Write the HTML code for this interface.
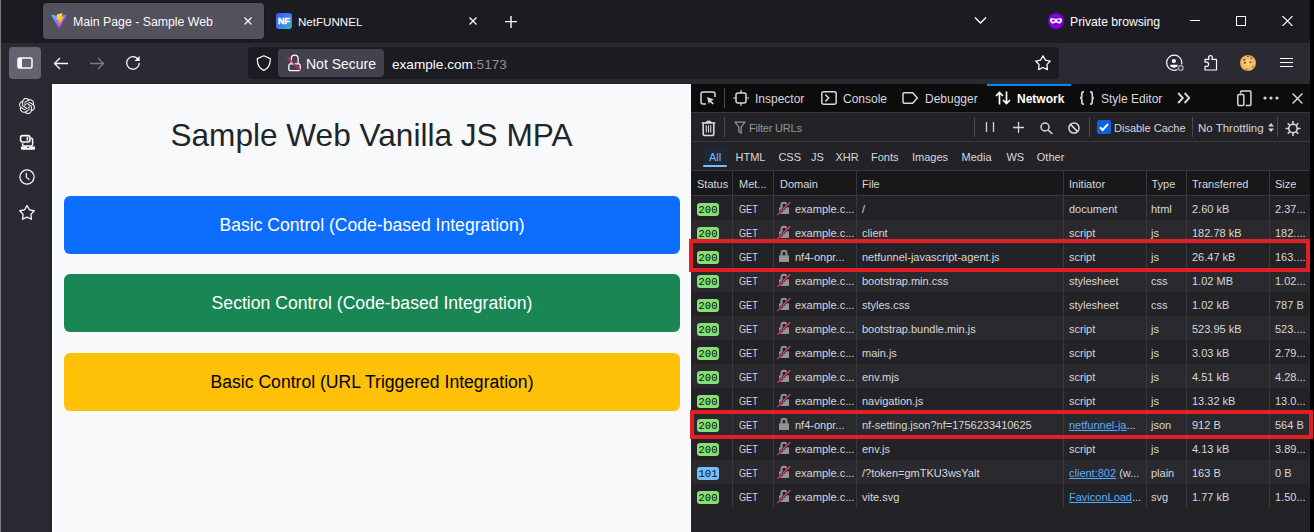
<!DOCTYPE html>
<html><head><meta charset="utf-8"><style>
html,body{margin:0;padding:0;width:1314px;height:532px;overflow:hidden;background:#000}
body{position:relative;font-family:"Liberation Sans",sans-serif}
body>div,body>svg{position:absolute;box-sizing:border-box}
.t{white-space:nowrap}
</style></head><body>
<div style="left:0px;top:0px;width:1314px;height:532px;background:#000;"></div>
<div style="left:0px;top:0px;width:1310px;height:43px;background:#1c1b22;"></div>
<div style="left:0px;top:43px;width:1310px;height:41px;background:#2b2a33;"></div>
<div style="left:0px;top:84px;width:52px;height:448px;background:#2b2a33;"></div>
<div style="left:0px;top:0px;width:1px;height:532px;background:#7b7b7c;"></div>
<div style="left:43px;top:3px;width:221px;height:36px;background:#52515c;border-radius:4px;box-shadow:0 0 2px rgba(0,0,0,.5)"></div>
<svg style="left:51px;top:13px;" width="16" height="16" viewBox="0 0 410 404"><defs><linearGradient id="vg1" gradientUnits="userSpaceOnUse" x1="6" y1="33" x2="235" y2="344"><stop offset="0" stop-color="#41d1ff"/><stop offset="1" stop-color="#bd34fe"/></linearGradient><linearGradient id="vg2" gradientUnits="userSpaceOnUse" x1="194.65" y1="8.8" x2="236.08" y2="293"><stop offset="0" stop-color="#ffea83"/><stop offset=".083" stop-color="#ffdd35"/><stop offset="1" stop-color="#ffa800"/></linearGradient></defs><path d="M399.641 59.5246L215.643 388.545C211.844 395.338 202.084 395.378 198.228 388.618L10.5817 59.5563C6.38087 52.1896 12.6802 43.2665 21.0281 44.7586L205.223 77.6824C206.398 77.8924 207.601 77.8904 208.776 77.6763L389.119 44.8058C397.439 43.2894 403.768 52.1434 399.641 59.5246Z" fill="url(#vg1)"/><path d="M292.965 1.5744L156.801 28.2552C154.563 28.6937 152.906 30.5903 152.771 32.8664L144.395 174.33C144.198 177.662 147.258 180.248 150.51 179.498L188.42 170.749C191.967 169.931 195.172 173.055 194.443 176.622L183.18 231.775C182.422 235.487 185.907 238.661 189.532 237.56L212.947 230.446C216.577 229.344 220.065 232.527 219.297 236.242L201.398 322.875C200.278 328.294 207.486 331.249 210.492 326.603L212.5 323.5L323.454 102.072C325.312 98.3645 322.108 94.137 318.036 94.9228L279.014 102.454C275.347 103.161 272.227 99.746 273.262 96.1583L298.731 7.86689C299.767 4.27314 296.636 0.855181 292.965 1.5744Z" fill="url(#vg2)"/></svg>
<div class="t" style="left:73px;top:16px;font-size:12.3px;line-height:12.3px;color:#fbfbfe;font-weight:400;">Main Page - Sample Web</div>
<svg style="left:244px;top:17px;" width="8" height="8" viewBox="0 0 8 8"><path d="M.5.5l7 7M7.5.5l-7 7" stroke="#fbfbfe" stroke-width="1.3"/></svg>
<svg style="left:276px;top:13px;" width="16" height="16" viewBox="0 0 16 16"><defs><linearGradient id="nfg" x1="0" y1="0" x2="1" y2="1"><stop offset="0" stop-color="#3a5bff"/><stop offset=".55" stop-color="#3f7cf0"/><stop offset="1" stop-color="#22c4a0"/></linearGradient></defs>
<rect x="0" y="0" width="16" height="16" rx="3" fill="url(#nfg)"/>
<text x="8" y="11.2" font-family="Liberation Sans" font-weight="700" font-size="9" fill="#fff" text-anchor="middle" stroke="#fff" stroke-width=".45">NF</text></svg>
<div class="t" style="left:298px;top:16px;font-size:11.6px;line-height:11.6px;color:#fbfbfe;font-weight:400;">NetFUNNEL</div>
<svg style="left:469px;top:17px;" width="8" height="8" viewBox="0 0 8 8"><path d="M.5.5l7 7M7.5.5l-7 7" stroke="#fbfbfe" stroke-width="1.3"/></svg>
<svg style="left:505px;top:16px;" width="12" height="12" viewBox="0 0 12 12"><path d="M6 0v12M0 5.6h12" stroke="#fbfbfe" stroke-width="1.4"/></svg>
<svg style="left:974px;top:16px;" width="13" height="9" viewBox="0 0 13 9"><path d="M1 1.5l5.5 5.5 5.5-5.5" stroke="#fbfbfe" stroke-width="1.4" fill="none"/></svg>
<svg style="left:1048px;top:13px;" width="16" height="16" viewBox="0 0 16 16"><circle cx="8" cy="8" r="8" fill="#8000d7"/><path d="M2 6.6c0-1.3 2.6-1.9 6-.5 3.4-1.4 6-.8 6 .5 0 2.6-1.2 4-2.8 4-1.5 0-2-1.2-3.2-1.2s-1.7 1.2-3.2 1.2C3.2 10.6 2 9.2 2 6.6z" fill="#fff"/><ellipse cx="5.3" cy="7.6" rx="1.5" ry="1.1" fill="#8000d7"/><ellipse cx="10.7" cy="7.6" rx="1.5" ry="1.1" fill="#8000d7"/></svg>
<div class="t" style="left:1070px;top:16px;font-size:12.2px;line-height:12.2px;color:#fbfbfe;font-weight:400;">Private browsing</div>
<div style="left:1190px;top:20px;width:10px;height:1px;background:#fbfbfe;"></div>
<svg style="left:1236px;top:16px;" width="10" height="10" viewBox="0 0 10 10"><rect x=".5" y=".5" width="9" height="9" fill="none" stroke="#fbfbfe" stroke-width="1"/></svg>
<svg style="left:1282px;top:16px;" width="11" height="10" viewBox="0 0 11 10"><path d="M.5 0l10 10M10.5 0l-10 10" stroke="#fbfbfe" stroke-width="1.1"/></svg>
<div style="left:9px;top:47px;width:32px;height:32px;background:#65646e;border-radius:4px"></div>
<svg style="left:17px;top:57px;" width="16" height="12" viewBox="0 0 16 12"><rect x="1" y="1" width="14" height="10" rx="1.5" fill="none" stroke="#fbfbfe" stroke-width="1.5"/><rect x="1" y="1" width="4" height="10" fill="#fbfbfe"/></svg>
<svg style="left:53px;top:57px;" width="16" height="13" viewBox="0 0 16 13"><path d="M15 6.5H1.5M7 1L1.5 6.5 7 12" stroke="#fbfbfe" stroke-width="1.3" fill="none"/></svg>
<svg style="left:89px;top:57px;" width="16" height="13" viewBox="0 0 16 13"><path d="M1 6.5h13.5M9 1l5.5 5.5L9 12" stroke="#7f7e88" stroke-width="1.3" fill="none"/></svg>
<svg style="left:125px;top:55px;" width="16" height="15" viewBox="0 0 16 15"><path d="M13.2 4.3A6.3 6.3 0 1 0 14.3 8" stroke="#fbfbfe" stroke-width="1.3" fill="none"/><path d="M14.6 .9v5.2H9.4z" fill="#fbfbfe"/></svg>
<div style="left:248px;top:47px;width:811px;height:32px;background:#1c1b22;border-radius:4px"></div>
<svg style="left:256px;top:55px;" width="16" height="16" viewBox="0 0 16 16"><path d="M7.8 .8L14.2 3.6C14.6 9.2 11.6 13.6 7.8 15.4 4 13.6 1 9.2 1.4 3.6Z" fill="none" stroke="#fbfbfe" stroke-width="1.2" stroke-linejoin="round"/></svg>
<div style="left:278px;top:49px;width:106px;height:28px;background:#42414d;border-radius:4px"></div>
<svg style="left:285px;top:53px;" width="17" height="19" viewBox="0 0 17 19"><path d="M6.3 10.8V5.6a3.4 3.4 0 0 1 6.8 0V10.8" stroke="#fbfbfe" stroke-width="1.3" fill="none"/><rect x="3.8" y="10.9" width="11.4" height="6.8" rx="1.6" fill="none" stroke="#fbfbfe" stroke-width="1.3"/><path d="M2.3 4.2L16 17.8" stroke="#e22850" stroke-width="1.4"/></svg>
<div class="t" style="left:306px;top:57px;font-size:14px;line-height:14px;color:#fbfbfe;font-weight:400;">Not Secure</div>
<div class="t" style="left:392px;top:58px;font-size:13.6px;line-height:13.6px;color:#fbfbfe;font-weight:400;">example.com<span style="color:#8f8f9d">:5173</span></div>
<svg style="left:1033px;top:54px;" width="20" height="19" viewBox="0 0 20 19"><path d="M10.00 1.80L12.41 6.08L17.23 7.05L13.90 10.67L14.47 15.55L10.00 13.50L5.53 15.55L6.10 10.67L2.77 7.05L7.59 6.08Z" fill="none" stroke="#fbfbfe" stroke-width="1.3" stroke-linejoin="round"/></svg>
<svg style="left:1165px;top:54px;" width="21" height="19" viewBox="0 0 21 19"><circle cx="9.2" cy="8.8" r="7.6" fill="none" stroke="#fbfbfe" stroke-width="1.2"/><circle cx="15.8" cy="13.9" r="3.6" fill="#2b2a33"/><circle cx="15.8" cy="13.9" r="2.3" fill="none" stroke="#b8b8c0" stroke-width="1.1"/><circle cx="8.9" cy="7" r="2.1" fill="#fbfbfe"/><path d="M5 10.8h7.8c0 1.8-1.7 3-3.9 3s-3.9-1.2-3.9-3z" fill="#fbfbfe"/></svg>
<svg style="left:1203px;top:54px;" width="15" height="18" viewBox="0 0 15 18"><path d="M2 5.4H6C6 4.5 5.6 4.2 5.6 3.5A1.9 1.9 0 0 1 9.4 3.5C9.4 4.2 9 4.5 9 5.4H13.5V16H2V12.4H3.5A2.15 2.15 0 0 0 3.5 8.1H2Z" fill="none" stroke="#fbfbfe" stroke-width="1.2" stroke-linejoin="round"/></svg>
<svg style="left:1240px;top:55px;" width="16" height="16" viewBox="0 0 16 16"><defs><radialGradient id="ck" cx=".5" cy=".5" r=".55"><stop offset="0" stop-color="#f6d690"/><stop offset=".8" stop-color="#eeb659"/><stop offset="1" stop-color="#d89a3c"/></radialGradient></defs><circle cx="8" cy="8" r="8" fill="url(#ck)"/><circle cx="8" cy="1.3" r=".9" fill="#7a3d14"/><circle cx="4.3" cy="4.8" r="1" fill="#7a3d14"/><circle cx="11.3" cy="3.4" r=".8" fill="#7a3d14"/><circle cx="5" cy="7.8" r="1" fill="#7a3d14"/><ellipse cx="10.5" cy="7.2" rx="1.3" ry=".8" fill="#7a3d14"/><circle cx="12.8" cy="11.8" r=".8" fill="#8a4d20"/><circle cx="6.5" cy="14.6" r=".8" fill="#8a4d20"/></svg>
<svg style="left:1280px;top:57px;" width="13" height="11" viewBox="0 0 13 11"><path d="M0 1.5h13M0 5.5h13M0 9.5h13" stroke="#fbfbfe" stroke-width="1.2"/></svg>
<svg style="left:19px;top:98px;" width="16" height="16" viewBox="0 0 24 24"><path d="M22.2819 9.8211a5.9847 5.9847 0 0 0-.5157-4.9108 6.0462 6.0462 0 0 0-6.5098-2.9A6.0651 6.0651 0 0 0 4.9807 4.1818a5.9847 5.9847 0 0 0-3.9977 2.9 6.0462 6.0462 0 0 0 .7427 7.0966 5.98 5.98 0 0 0 .511 4.9107 6.051 6.051 0 0 0 6.5146 2.9001A5.9847 5.9847 0 0 0 13.2599 24a6.0557 6.0557 0 0 0 5.7718-4.2058 5.9894 5.9894 0 0 0 3.9977-2.9001 6.0557 6.0557 0 0 0-.7475-7.0729zm-9.022 12.6081a4.4755 4.4755 0 0 1-2.8764-1.0408l.1419-.0804 4.7783-2.7582a.7948.7948 0 0 0 .3927-.6813v-6.7369l2.02 1.1686a.071.071 0 0 1 .038.052v5.5826a4.504 4.504 0 0 1-4.4945 4.4944zm-9.6607-4.1254a4.4708 4.4708 0 0 1-.5346-3.0137l.142.0852 4.783 2.7582a.7712.7712 0 0 0 .7806 0l5.8428-3.3685v2.3324a.0804.0804 0 0 1-.0332.0615L9.74 19.9502a4.4992 4.4992 0 0 1-6.1408-1.6464zM2.3408 7.8956a4.485 4.485 0 0 1 2.3655-1.9728V11.6a.7664.7664 0 0 0 .3879.6765l5.8144 3.3543-2.0201 1.1685a.0757.0757 0 0 1-.071 0l-4.8303-2.7865A4.504 4.504 0 0 1 2.3408 7.872zm16.5963 3.8558L13.1038 8.364 15.1192 7.2a.0757.0757 0 0 1 .071 0l4.8303 2.7913a4.4944 4.4944 0 0 1-.6765 8.1042v-5.6772a.79.79 0 0 0-.407-.667zm2.0107-3.0231l-.142-.0852-4.7735-2.7818a.7759.7759 0 0 0-.7854 0L9.409 9.2297V6.8974a.0662.0662 0 0 1 .0284-.0615l4.8303-2.7866a4.4992 4.4992 0 0 1 6.6802 4.66zM8.3065 12.863l-2.02-1.1638a.0804.0804 0 0 1-.038-.0567V6.0742a4.4992 4.4992 0 0 1 7.3757-3.4537l-.142.0805L8.704 5.459a.7948.7948 0 0 0-.3927.6813zm1.0976-2.3654l2.602-1.4998 2.6069 1.4998v2.9994l-2.5974 1.4997-2.6067-1.4997Z" fill="#fbfbfe"/></svg>
<svg style="left:19px;top:134px;" width="17" height="17" viewBox="0 0 17 17"><rect x="1.6" y="1.6" width="9.4" height="6.4" rx="2" fill="none" stroke="#fbfbfe" stroke-width="1.6"/><rect x="7.6" y="3" width="1.6" height="3.6" fill="#fbfbfe"/><path d="M3.6 9.2v1.2a1.5 1.5 0 0 0 1.5 1.5h7a1.5 1.5 0 0 0 1.5-1.5V5.7a1.5 1.5 0 0 0-1.5-1.5h-.3" fill="none" stroke="#fbfbfe" stroke-width="1.5"/><path d="M2 12.6h14v2.1a1 1 0 0 1-1 1H3a1 1 0 0 1-1-1z" fill="#fbfbfe"/><ellipse cx="9" cy="13.4" rx="1" ry=".6" fill="#2b2a33"/></svg>
<svg style="left:19px;top:169px;" width="16" height="16" viewBox="0 0 16 16"><circle cx="8" cy="8" r="7.1" fill="none" stroke="#fbfbfe" stroke-width="1.2"/><path d="M7.3 3.8v4.3l3 2.6" stroke="#fbfbfe" stroke-width="1.2" fill="none"/></svg>
<svg style="left:17px;top:204px;" width="20" height="19" viewBox="0 0 20 19"><path d="M10.00 1.50L12.41 5.78L17.23 6.75L13.90 10.37L14.47 15.25L10.00 13.20L5.53 15.25L6.10 10.37L2.77 6.75L7.59 5.78Z" fill="none" stroke="#fbfbfe" stroke-width="1.3" stroke-linejoin="round"/></svg>
<div style="left:52px;top:84px;width:639px;height:448px;background:#fff;"></div>
<div style="left:53px;top:85px;width:638px;height:447px;background:#f8f9fa;"></div>
<div style="left:52px;top:84px;width:639px;height:448px;background:transparent;box-shadow:-1px 0 4px rgba(0,0,0,.35)"></div>
<div class="t" style="left:52px;top:119px;width:639px;text-align:center;font-size:31.6px;line-height:32px;color:#212529">Sample Web Vanilla JS MPA</div>
<div class="t" style="left:64px;top:196px;width:616px;height:58px;border-radius:6px;background:#0d6efd;color:#fff;font-size:17.6px;line-height:58px;text-align:center">Basic Control (Code-based Integration)</div>
<div class="t" style="left:64px;top:274.2px;width:616px;height:58px;border-radius:6px;background:#198754;color:#fff;font-size:17.6px;line-height:58px;text-align:center">Section Control (Code-based Integration)</div>
<div class="t" style="left:64px;top:353px;width:616px;height:58px;border-radius:6px;background:#ffc107;color:#000;font-size:17.6px;line-height:58px;text-align:center">Basic Control (URL Triggered Integration)</div>
<div style="left:691px;top:84px;width:619px;height:448px;background:#232327;"></div>
<div style="left:691px;top:84px;width:619px;height:28px;background:#0c0c0d;"></div>
<div style="left:691px;top:112px;width:619px;height:1px;background:#38383d;"></div>
<div style="left:691px;top:141px;width:619px;height:1px;background:#38383d;"></div>
<div style="left:691px;top:170px;width:619px;height:1px;background:#38383d;"></div>
<div style="left:691px;top:171px;width:619px;height:24px;background:#18181a;"></div>
<div style="left:691px;top:195px;width:619px;height:1px;background:#38383d;"></div>
<svg style="left:700px;top:91px;" width="16" height="14" viewBox="0 0 16 14"><path d="M6 13H3a2 2 0 0 1-2-2V3a2 2 0 0 1 2-2h10a2 2 0 0 1 2 2v3" fill="none" stroke="#d7d7db" stroke-width="1.5"/><path d="M7 6l7 2.6-2.8 1.2 2.6 2.6-1.2 1.2-2.6-2.6L8.8 13z" fill="#d7d7db"/></svg>
<div style="left:724px;top:88px;width:1px;height:20px;background:#4a4a4f;"></div>
<svg style="left:733px;top:90px;" width="16" height="16" viewBox="0 0 16 16"><rect x="3" y="3" width="10" height="10" rx="2" fill="none" stroke="#d7d7db" stroke-width="1.5"/><path d="M8 0v3M8 13v3M0 8h3M13 8h3" stroke="#d7d7db" stroke-width="1.2"/></svg>
<div class="t" style="left:755px;top:93px;font-size:12px;line-height:12px;color:#d7d7db;font-weight:400;">Inspector</div>
<svg style="left:821px;top:91px;" width="16" height="14" viewBox="0 0 16 14"><rect x=".8" y=".8" width="14.4" height="12.4" rx="2" fill="none" stroke="#d7d7db" stroke-width="1.5"/><path d="M4.3 3.6L7.7 7 4.3 10.4" stroke="#d7d7db" stroke-width="1.5" fill="none"/></svg>
<div class="t" style="left:843px;top:93px;font-size:12px;line-height:12px;color:#d7d7db;font-weight:400;">Console</div>
<svg style="left:902px;top:92px;" width="16" height="12" viewBox="0 0 16 12"><path d="M1 2a1.2 1.2 0 0 1 1.2-1.2h8.5l4.6 5.2-4.6 5.2H2.2A1.2 1.2 0 0 1 1 10z" fill="none" stroke="#d7d7db" stroke-width="1.5" stroke-linejoin="round"/></svg>
<div class="t" style="left:925px;top:93px;font-size:12px;line-height:12px;color:#d7d7db;font-weight:400;">Debugger</div>
<div style="left:987px;top:84px;width:84px;height:2px;background:#0a84ff;"></div>
<svg style="left:995px;top:91px;" width="16" height="14" viewBox="0 0 16 14"><path d="M4.5 13.5V1.5M1 5l3.5-3.5L8 5M11.5.5v12M8 9l3.5 3.5L15 9" stroke="#fff" stroke-width="1.7" fill="none"/></svg>
<div class="t" style="left:1017px;top:93px;font-size:12px;line-height:12px;color:#fff;font-weight:700;">Network</div>
<svg style="left:1079px;top:91px;" width="16" height="14" viewBox="0 0 16 14"><path d="M5 .9H4.2C3.2.9 2.8 1.5 2.8 2.4V5C2.8 6 2.2 7 1 7 2.2 7 2.8 8 2.8 9v2.6c0 .9.4 1.5 1.4 1.5H5M11 .9h.8c1 0 1.4.6 1.4 1.5V5c0 1 .6 2 1.8 2-1.2 0-1.8 1-1.8 2v2.6c0 .9-.4 1.5-1.4 1.5H11" fill="none" stroke="#d7d7db" stroke-width="1.7"/></svg>
<div class="t" style="left:1101px;top:93px;font-size:12px;line-height:12px;color:#d7d7db;font-weight:400;">Style Editor</div>
<svg style="left:1177px;top:92px;" width="14" height="12" viewBox="0 0 14 12"><path d="M1.2 1L5.8 6 1.2 11M7.6 1l4.6 5-4.6 5" stroke="#d7d7db" stroke-width="1.9" fill="none"/></svg>
<svg style="left:1237px;top:90px;" width="16" height="17" viewBox="0 0 16 17"><rect x=".8" y="4.6" width="6" height="11" rx="1" fill="none" stroke="#d7d7db" stroke-width="1.5"/><path d="M3.6 3.6V1.9a1 1 0 0 1 1-1h8.3a1 1 0 0 1 1 1v12.7a1 1 0 0 1-1 1H8.6" fill="none" stroke="#d7d7db" stroke-width="1.5"/></svg>
<svg style="left:1263px;top:96px;" width="16" height="4" viewBox="0 0 16 4"><circle cx="2" cy="2" r="1.6" fill="#d7d7db"/><circle cx="8" cy="2" r="1.6" fill="#d7d7db"/><circle cx="14" cy="2" r="1.6" fill="#d7d7db"/></svg>
<svg style="left:1292px;top:93px;" width="11" height="11" viewBox="0 0 11 11"><path d="M.6.6l9.8 9.8M10.4.6L.6 10.4" stroke="#d7d7db" stroke-width="1.4"/></svg>
<svg style="left:701px;top:119px;" width="15" height="18" viewBox="0 0 15 18"><path d="M.8 4H14.2" stroke="#d7d7db" stroke-width="1.6"/><path d="M5 4a2.5 1.8 0 0 1 5 0" fill="#d7d7db" stroke="#d7d7db" stroke-width="1.2"/><path d="M2.2 4.3V14.7a1.8 1.8 0 0 0 1.8 1.8h7a1.8 1.8 0 0 0 1.8-1.8V4.3" fill="none" stroke="#d7d7db" stroke-width="1.6"/><path d="M5.3 6.2V13.6M7.5 6.2V13.6M9.7 6.2V13.6" stroke="#d7d7db" stroke-width="1.1"/></svg>
<div style="left:724px;top:117px;width:1px;height:20px;background:#4a4a4f;"></div>
<svg style="left:734px;top:121px;" width="12" height="13" viewBox="0 0 12 13"><path d="M1 1.2h10L7.2 5.8v6.4L4.8 10.6V5.8z" fill="none" stroke="#939395" stroke-width="1.2" stroke-linejoin="round"/><path d="M5.2 6h1.6v5.2L5.2 10.2z" fill="#5f5f63"/></svg>
<div class="t" style="left:749px;top:123px;font-size:11px;line-height:11px;color:#939395;font-weight:400;letter-spacing:-0.2px">Filter URLs</div>
<div style="left:974px;top:117px;width:1px;height:20px;background:#4a4a4f;"></div>
<svg style="left:985px;top:122px;" width="10" height="11" viewBox="0 0 10 11"><path d="M1.5 0v10M8.5 0v10" stroke="#d7d7db" stroke-width="1.3"/></svg>
<svg style="left:1013px;top:122px;" width="11" height="11" viewBox="0 0 11 11"><path d="M5.5 0v11M0 5.5h11" stroke="#d7d7db" stroke-width="1.3"/></svg>
<svg style="left:1040px;top:122px;" width="14" height="12" viewBox="0 0 14 12"><circle cx="5" cy="5" r="4" fill="none" stroke="#d7d7db" stroke-width="1.5"/><path d="M8 8l4.5 4" stroke="#d7d7db" stroke-width="1.6"/></svg>
<svg style="left:1068px;top:122px;" width="12" height="12" viewBox="0 0 12 12"><circle cx="6" cy="6" r="5.1" fill="none" stroke="#d7d7db" stroke-width="1.5"/><path d="M2.4 2.4l7.2 7.2" stroke="#d7d7db" stroke-width="1.5"/></svg>
<div style="left:1089px;top:117px;width:1px;height:20px;background:#4a4a4f;"></div>
<div style="left:1097px;top:120px;width:14px;height:14px;background:#0b63e0;border-radius:2px"></div>
<svg style="left:1099px;top:122px;" width="10" height="10" viewBox="0 0 10 10"><path d="M1 5.2l2.7 2.8L9 2" stroke="#fff" stroke-width="2" fill="none"/></svg>
<div class="t" style="left:1114px;top:123px;font-size:11px;line-height:11px;color:#d7d7db;font-weight:400;">Disable Cache</div>
<div style="left:1192px;top:117px;width:1px;height:20px;background:#4a4a4f;"></div>
<div class="t" style="left:1198px;top:123px;font-size:11.5px;line-height:11.5px;color:#d7d7db;font-weight:400;">No Throttling</div>
<svg style="left:1268px;top:122px;" width="6" height="11" viewBox="0 0 6 11"><path d="M0 4.5L3 1l3 3.5zM0 6.5L3 10l3-3.5z" fill="#d7d7db"/></svg>
<div style="left:1277px;top:117px;width:1px;height:20px;background:#4a4a4f;"></div>
<svg style="left:1285px;top:121px;" width="16" height="15" viewBox="0 0 16 15"><g stroke="#d7d7db" stroke-width="1.6"><path d="M8 0v15M0.5 7.5h15M2.7 2.2l10.6 10.6M13.3 2.2L2.7 12.8"/></g><circle cx="8" cy="7.5" r="4.2" fill="#232327" stroke="#d7d7db" stroke-width="1.6"/></svg>
<div style="left:703px;top:146px;width:24px;height:21px;background:#1f2735;border-radius:2px 2px 0 0"></div>
<div style="left:703px;top:165px;width:24px;height:2px;background:#75bfff;border-radius:1px"></div>
<div class="t" style="left:709px;top:152px;font-size:11px;line-height:11px;color:#75bfff;font-weight:400;">All</div>
<div class="t" style="left:735.5px;top:152px;font-size:11px;line-height:11px;color:#d7d7db;font-weight:400;">HTML</div>
<div class="t" style="left:778.4px;top:152px;font-size:11px;line-height:11px;color:#d7d7db;font-weight:400;">CSS</div>
<div class="t" style="left:811px;top:152px;font-size:11px;line-height:11px;color:#d7d7db;font-weight:400;">JS</div>
<div class="t" style="left:835.4px;top:152px;font-size:11px;line-height:11px;color:#d7d7db;font-weight:400;">XHR</div>
<div class="t" style="left:871px;top:152px;font-size:11px;line-height:11px;color:#d7d7db;font-weight:400;">Fonts</div>
<div class="t" style="left:912px;top:152px;font-size:11px;line-height:11px;color:#d7d7db;font-weight:400;">Images</div>
<div class="t" style="left:961.6px;top:152px;font-size:11px;line-height:11px;color:#d7d7db;font-weight:400;">Media</div>
<div class="t" style="left:1006.4px;top:152px;font-size:11px;line-height:11px;color:#d7d7db;font-weight:400;">WS</div>
<div class="t" style="left:1036.8px;top:152px;font-size:11px;line-height:11px;color:#d7d7db;font-weight:400;">Other</div>
<div class="t" style="left:697px;top:179px;font-size:11px;line-height:11px;color:#d7d7db;font-weight:400;">Status</div>
<div class="t" style="left:739px;top:179px;font-size:11px;line-height:11px;color:#d7d7db;font-weight:400;">Met...</div>
<div class="t" style="left:780px;top:179px;font-size:11px;line-height:11px;color:#d7d7db;font-weight:400;">Domain</div>
<div class="t" style="left:862px;top:179px;font-size:11px;line-height:11px;color:#d7d7db;font-weight:400;">File</div>
<div class="t" style="left:1069px;top:179px;font-size:11px;line-height:11px;color:#d7d7db;font-weight:400;">Initiator</div>
<div class="t" style="left:1151.5px;top:179px;font-size:11px;line-height:11px;color:#d7d7db;font-weight:400;">Type</div>
<div class="t" style="left:1192px;top:179px;font-size:11px;line-height:11px;color:#d7d7db;font-weight:400;">Transferred</div>
<div class="t" style="left:1275px;top:179px;font-size:11px;line-height:11px;color:#d7d7db;font-weight:400;">Size</div>
<div class="t" style="left:697px;top:203px;width:22px;height:13px;padding-top:1px;border-radius:3px;background:#86de74;color:#0c0c0d;font-family:&quot;Liberation Mono&quot;,monospace;font-size:10.5px;line-height:13px;text-align:center">200</div>
<div class="t" style="left:739px;top:204px;font-size:11px;line-height:11px;color:#d7d7db;font-weight:400;transform:scaleX(.83);transform-origin:0 0">GET</div>
<svg style="left:777px;top:201px;" width="14" height="15" viewBox="0 0 14 15"><path d="M4.5 6.6V4.3a2.5 2.5 0 0 1 5 0V6.6" fill="none" stroke="#939395" stroke-width="2"/><rect x="2" y="6.3" width="10" height="6.7" rx=".8" fill="#939395"/><path d="M.5 13.9L13.2 1.2" stroke="#232327" stroke-width="2.6"/><path d="M.5 13.9L13.2 1.2" stroke="#f0386b" stroke-width="1.3"/></svg>
<div class="t" style="left:795px;top:204px;font-size:11px;line-height:11px;color:#d7d7db;font-weight:400;">example.c...</div>
<div class="t" style="left:862px;top:204px;font-size:11px;line-height:11px;color:#d7d7db;font-weight:400;">/</div>
<div class="t" style="left:1069px;top:204px;font-size:11px;line-height:11px;color:#d7d7db;font-weight:400;">document</div>
<div class="t" style="left:1151px;top:204px;font-size:11px;line-height:11px;color:#d7d7db;font-weight:400;">html</div>
<div class="t" style="left:1192px;top:204px;font-size:11px;line-height:11px;color:#d7d7db;font-weight:400;">2.60 kB</div>
<div class="t" style="left:1275px;top:204px;font-size:11px;line-height:11px;color:#d7d7db;font-weight:400;">2.37...</div>
<div style="left:691px;top:220px;width:619px;height:24px;background:#2a2a2e;"></div>
<div class="t" style="left:697px;top:227px;width:22px;height:13px;padding-top:1px;border-radius:3px;background:#86de74;color:#0c0c0d;font-family:&quot;Liberation Mono&quot;,monospace;font-size:10.5px;line-height:13px;text-align:center">200</div>
<div class="t" style="left:739px;top:228px;font-size:11px;line-height:11px;color:#d7d7db;font-weight:400;transform:scaleX(.83);transform-origin:0 0">GET</div>
<svg style="left:777px;top:225px;" width="14" height="15" viewBox="0 0 14 15"><path d="M4.5 6.6V4.3a2.5 2.5 0 0 1 5 0V6.6" fill="none" stroke="#939395" stroke-width="2"/><rect x="2" y="6.3" width="10" height="6.7" rx=".8" fill="#939395"/><path d="M.5 13.9L13.2 1.2" stroke="#2a2a2e" stroke-width="2.6"/><path d="M.5 13.9L13.2 1.2" stroke="#f0386b" stroke-width="1.3"/></svg>
<div class="t" style="left:795px;top:228px;font-size:11px;line-height:11px;color:#d7d7db;font-weight:400;">example.c...</div>
<div class="t" style="left:862px;top:228px;font-size:11px;line-height:11px;color:#d7d7db;font-weight:400;">client</div>
<div class="t" style="left:1069px;top:228px;font-size:11px;line-height:11px;color:#d7d7db;font-weight:400;">script</div>
<div class="t" style="left:1151px;top:228px;font-size:11px;line-height:11px;color:#d7d7db;font-weight:400;">js</div>
<div class="t" style="left:1192px;top:228px;font-size:11px;line-height:11px;color:#d7d7db;font-weight:400;">182.78 kB</div>
<div class="t" style="left:1275px;top:228px;font-size:11px;line-height:11px;color:#d7d7db;font-weight:400;">182....</div>
<div class="t" style="left:697px;top:251px;width:22px;height:13px;padding-top:1px;border-radius:3px;background:#86de74;color:#0c0c0d;font-family:&quot;Liberation Mono&quot;,monospace;font-size:10.5px;line-height:13px;text-align:center">200</div>
<div class="t" style="left:739px;top:252px;font-size:11px;line-height:11px;color:#d7d7db;font-weight:400;transform:scaleX(.83);transform-origin:0 0">GET</div>
<svg style="left:777px;top:249px;" width="14" height="15" viewBox="0 0 14 15"><path d="M4.5 6.6V4.3a2.5 2.5 0 0 1 5 0V6.6" fill="none" stroke="#939395" stroke-width="2"/><rect x="2" y="6.3" width="10" height="6.7" rx=".8" fill="#939395"/></svg>
<div class="t" style="left:795px;top:252px;font-size:11px;line-height:11px;color:#d7d7db;font-weight:400;">nf4-onpr...</div>
<div class="t" style="left:862px;top:252px;font-size:11px;line-height:11px;color:#d7d7db;font-weight:400;">netfunnel-javascript-agent.js</div>
<div class="t" style="left:1069px;top:252px;font-size:11px;line-height:11px;color:#d7d7db;font-weight:400;">script</div>
<div class="t" style="left:1151px;top:252px;font-size:11px;line-height:11px;color:#d7d7db;font-weight:400;">js</div>
<div class="t" style="left:1192px;top:252px;font-size:11px;line-height:11px;color:#d7d7db;font-weight:400;">26.47 kB</div>
<div class="t" style="left:1275px;top:252px;font-size:11px;line-height:11px;color:#d7d7db;font-weight:400;">163....</div>
<div style="left:691px;top:268px;width:619px;height:24px;background:#2a2a2e;"></div>
<div class="t" style="left:697px;top:275px;width:22px;height:13px;padding-top:1px;border-radius:3px;background:#86de74;color:#0c0c0d;font-family:&quot;Liberation Mono&quot;,monospace;font-size:10.5px;line-height:13px;text-align:center">200</div>
<div class="t" style="left:739px;top:276px;font-size:11px;line-height:11px;color:#d7d7db;font-weight:400;transform:scaleX(.83);transform-origin:0 0">GET</div>
<svg style="left:777px;top:273px;" width="14" height="15" viewBox="0 0 14 15"><path d="M4.5 6.6V4.3a2.5 2.5 0 0 1 5 0V6.6" fill="none" stroke="#939395" stroke-width="2"/><rect x="2" y="6.3" width="10" height="6.7" rx=".8" fill="#939395"/><path d="M.5 13.9L13.2 1.2" stroke="#2a2a2e" stroke-width="2.6"/><path d="M.5 13.9L13.2 1.2" stroke="#f0386b" stroke-width="1.3"/></svg>
<div class="t" style="left:795px;top:276px;font-size:11px;line-height:11px;color:#d7d7db;font-weight:400;">example.c...</div>
<div class="t" style="left:862px;top:276px;font-size:11px;line-height:11px;color:#d7d7db;font-weight:400;">bootstrap.min.css</div>
<div class="t" style="left:1069px;top:276px;font-size:11px;line-height:11px;color:#d7d7db;font-weight:400;">stylesheet</div>
<div class="t" style="left:1151px;top:276px;font-size:11px;line-height:11px;color:#d7d7db;font-weight:400;">css</div>
<div class="t" style="left:1192px;top:276px;font-size:11px;line-height:11px;color:#d7d7db;font-weight:400;">1.02 MB</div>
<div class="t" style="left:1275px;top:276px;font-size:11px;line-height:11px;color:#d7d7db;font-weight:400;">1.02...</div>
<div class="t" style="left:697px;top:299px;width:22px;height:13px;padding-top:1px;border-radius:3px;background:#86de74;color:#0c0c0d;font-family:&quot;Liberation Mono&quot;,monospace;font-size:10.5px;line-height:13px;text-align:center">200</div>
<div class="t" style="left:739px;top:300px;font-size:11px;line-height:11px;color:#d7d7db;font-weight:400;transform:scaleX(.83);transform-origin:0 0">GET</div>
<svg style="left:777px;top:297px;" width="14" height="15" viewBox="0 0 14 15"><path d="M4.5 6.6V4.3a2.5 2.5 0 0 1 5 0V6.6" fill="none" stroke="#939395" stroke-width="2"/><rect x="2" y="6.3" width="10" height="6.7" rx=".8" fill="#939395"/><path d="M.5 13.9L13.2 1.2" stroke="#232327" stroke-width="2.6"/><path d="M.5 13.9L13.2 1.2" stroke="#f0386b" stroke-width="1.3"/></svg>
<div class="t" style="left:795px;top:300px;font-size:11px;line-height:11px;color:#d7d7db;font-weight:400;">example.c...</div>
<div class="t" style="left:862px;top:300px;font-size:11px;line-height:11px;color:#d7d7db;font-weight:400;">styles.css</div>
<div class="t" style="left:1069px;top:300px;font-size:11px;line-height:11px;color:#d7d7db;font-weight:400;">stylesheet</div>
<div class="t" style="left:1151px;top:300px;font-size:11px;line-height:11px;color:#d7d7db;font-weight:400;">css</div>
<div class="t" style="left:1192px;top:300px;font-size:11px;line-height:11px;color:#d7d7db;font-weight:400;">1.02 kB</div>
<div class="t" style="left:1275px;top:300px;font-size:11px;line-height:11px;color:#d7d7db;font-weight:400;">787 B</div>
<div style="left:691px;top:316px;width:619px;height:24px;background:#2a2a2e;"></div>
<div class="t" style="left:697px;top:323px;width:22px;height:13px;padding-top:1px;border-radius:3px;background:#86de74;color:#0c0c0d;font-family:&quot;Liberation Mono&quot;,monospace;font-size:10.5px;line-height:13px;text-align:center">200</div>
<div class="t" style="left:739px;top:324px;font-size:11px;line-height:11px;color:#d7d7db;font-weight:400;transform:scaleX(.83);transform-origin:0 0">GET</div>
<svg style="left:777px;top:321px;" width="14" height="15" viewBox="0 0 14 15"><path d="M4.5 6.6V4.3a2.5 2.5 0 0 1 5 0V6.6" fill="none" stroke="#939395" stroke-width="2"/><rect x="2" y="6.3" width="10" height="6.7" rx=".8" fill="#939395"/><path d="M.5 13.9L13.2 1.2" stroke="#2a2a2e" stroke-width="2.6"/><path d="M.5 13.9L13.2 1.2" stroke="#f0386b" stroke-width="1.3"/></svg>
<div class="t" style="left:795px;top:324px;font-size:11px;line-height:11px;color:#d7d7db;font-weight:400;">example.c...</div>
<div class="t" style="left:862px;top:324px;font-size:11px;line-height:11px;color:#d7d7db;font-weight:400;">bootstrap.bundle.min.js</div>
<div class="t" style="left:1069px;top:324px;font-size:11px;line-height:11px;color:#d7d7db;font-weight:400;">script</div>
<div class="t" style="left:1151px;top:324px;font-size:11px;line-height:11px;color:#d7d7db;font-weight:400;">js</div>
<div class="t" style="left:1192px;top:324px;font-size:11px;line-height:11px;color:#d7d7db;font-weight:400;">523.95 kB</div>
<div class="t" style="left:1275px;top:324px;font-size:11px;line-height:11px;color:#d7d7db;font-weight:400;">523....</div>
<div class="t" style="left:697px;top:347px;width:22px;height:13px;padding-top:1px;border-radius:3px;background:#86de74;color:#0c0c0d;font-family:&quot;Liberation Mono&quot;,monospace;font-size:10.5px;line-height:13px;text-align:center">200</div>
<div class="t" style="left:739px;top:348px;font-size:11px;line-height:11px;color:#d7d7db;font-weight:400;transform:scaleX(.83);transform-origin:0 0">GET</div>
<svg style="left:777px;top:345px;" width="14" height="15" viewBox="0 0 14 15"><path d="M4.5 6.6V4.3a2.5 2.5 0 0 1 5 0V6.6" fill="none" stroke="#939395" stroke-width="2"/><rect x="2" y="6.3" width="10" height="6.7" rx=".8" fill="#939395"/><path d="M.5 13.9L13.2 1.2" stroke="#232327" stroke-width="2.6"/><path d="M.5 13.9L13.2 1.2" stroke="#f0386b" stroke-width="1.3"/></svg>
<div class="t" style="left:795px;top:348px;font-size:11px;line-height:11px;color:#d7d7db;font-weight:400;">example.c...</div>
<div class="t" style="left:862px;top:348px;font-size:11px;line-height:11px;color:#d7d7db;font-weight:400;">main.js</div>
<div class="t" style="left:1069px;top:348px;font-size:11px;line-height:11px;color:#d7d7db;font-weight:400;">script</div>
<div class="t" style="left:1151px;top:348px;font-size:11px;line-height:11px;color:#d7d7db;font-weight:400;">js</div>
<div class="t" style="left:1192px;top:348px;font-size:11px;line-height:11px;color:#d7d7db;font-weight:400;">3.03 kB</div>
<div class="t" style="left:1275px;top:348px;font-size:11px;line-height:11px;color:#d7d7db;font-weight:400;">2.79...</div>
<div style="left:691px;top:364px;width:619px;height:24px;background:#2a2a2e;"></div>
<div class="t" style="left:697px;top:371px;width:22px;height:13px;padding-top:1px;border-radius:3px;background:#86de74;color:#0c0c0d;font-family:&quot;Liberation Mono&quot;,monospace;font-size:10.5px;line-height:13px;text-align:center">200</div>
<div class="t" style="left:739px;top:372px;font-size:11px;line-height:11px;color:#d7d7db;font-weight:400;transform:scaleX(.83);transform-origin:0 0">GET</div>
<svg style="left:777px;top:369px;" width="14" height="15" viewBox="0 0 14 15"><path d="M4.5 6.6V4.3a2.5 2.5 0 0 1 5 0V6.6" fill="none" stroke="#939395" stroke-width="2"/><rect x="2" y="6.3" width="10" height="6.7" rx=".8" fill="#939395"/><path d="M.5 13.9L13.2 1.2" stroke="#2a2a2e" stroke-width="2.6"/><path d="M.5 13.9L13.2 1.2" stroke="#f0386b" stroke-width="1.3"/></svg>
<div class="t" style="left:795px;top:372px;font-size:11px;line-height:11px;color:#d7d7db;font-weight:400;">example.c...</div>
<div class="t" style="left:862px;top:372px;font-size:11px;line-height:11px;color:#d7d7db;font-weight:400;">env.mjs</div>
<div class="t" style="left:1069px;top:372px;font-size:11px;line-height:11px;color:#d7d7db;font-weight:400;">script</div>
<div class="t" style="left:1151px;top:372px;font-size:11px;line-height:11px;color:#d7d7db;font-weight:400;">js</div>
<div class="t" style="left:1192px;top:372px;font-size:11px;line-height:11px;color:#d7d7db;font-weight:400;">4.51 kB</div>
<div class="t" style="left:1275px;top:372px;font-size:11px;line-height:11px;color:#d7d7db;font-weight:400;">4.28...</div>
<div class="t" style="left:697px;top:395px;width:22px;height:13px;padding-top:1px;border-radius:3px;background:#86de74;color:#0c0c0d;font-family:&quot;Liberation Mono&quot;,monospace;font-size:10.5px;line-height:13px;text-align:center">200</div>
<div class="t" style="left:739px;top:396px;font-size:11px;line-height:11px;color:#d7d7db;font-weight:400;transform:scaleX(.83);transform-origin:0 0">GET</div>
<svg style="left:777px;top:393px;" width="14" height="15" viewBox="0 0 14 15"><path d="M4.5 6.6V4.3a2.5 2.5 0 0 1 5 0V6.6" fill="none" stroke="#939395" stroke-width="2"/><rect x="2" y="6.3" width="10" height="6.7" rx=".8" fill="#939395"/><path d="M.5 13.9L13.2 1.2" stroke="#232327" stroke-width="2.6"/><path d="M.5 13.9L13.2 1.2" stroke="#f0386b" stroke-width="1.3"/></svg>
<div class="t" style="left:795px;top:396px;font-size:11px;line-height:11px;color:#d7d7db;font-weight:400;">example.c...</div>
<div class="t" style="left:862px;top:396px;font-size:11px;line-height:11px;color:#d7d7db;font-weight:400;">navigation.js</div>
<div class="t" style="left:1069px;top:396px;font-size:11px;line-height:11px;color:#d7d7db;font-weight:400;">script</div>
<div class="t" style="left:1151px;top:396px;font-size:11px;line-height:11px;color:#d7d7db;font-weight:400;">js</div>
<div class="t" style="left:1192px;top:396px;font-size:11px;line-height:11px;color:#d7d7db;font-weight:400;">13.32 kB</div>
<div class="t" style="left:1275px;top:396px;font-size:11px;line-height:11px;color:#d7d7db;font-weight:400;">13.0...</div>
<div style="left:691px;top:412px;width:619px;height:24px;background:#2a2a2e;"></div>
<div class="t" style="left:697px;top:419px;width:22px;height:13px;padding-top:1px;border-radius:3px;background:#86de74;color:#0c0c0d;font-family:&quot;Liberation Mono&quot;,monospace;font-size:10.5px;line-height:13px;text-align:center">200</div>
<div class="t" style="left:739px;top:420px;font-size:11px;line-height:11px;color:#d7d7db;font-weight:400;transform:scaleX(.83);transform-origin:0 0">GET</div>
<svg style="left:777px;top:417px;" width="14" height="15" viewBox="0 0 14 15"><path d="M4.5 6.6V4.3a2.5 2.5 0 0 1 5 0V6.6" fill="none" stroke="#939395" stroke-width="2"/><rect x="2" y="6.3" width="10" height="6.7" rx=".8" fill="#939395"/></svg>
<div class="t" style="left:795px;top:420px;font-size:11px;line-height:11px;color:#d7d7db;font-weight:400;">nf4-onpr...</div>
<div class="t" style="left:862px;top:420px;font-size:11px;line-height:11px;color:#d7d7db;font-weight:400;">nf-setting.json?nf=1756233410625</div>
<div class="t" style="left:1069px;top:420px;font-size:11px;line-height:11px;color:#d7d7db;font-weight:400;"><span style="color:#5aabff;text-decoration:underline">netfunnel-ja</span>...</div>
<div class="t" style="left:1151px;top:420px;font-size:11px;line-height:11px;color:#d7d7db;font-weight:400;">json</div>
<div class="t" style="left:1192px;top:420px;font-size:11px;line-height:11px;color:#d7d7db;font-weight:400;">912 B</div>
<div class="t" style="left:1275px;top:420px;font-size:11px;line-height:11px;color:#d7d7db;font-weight:400;">564 B</div>
<div class="t" style="left:697px;top:443px;width:22px;height:13px;padding-top:1px;border-radius:3px;background:#86de74;color:#0c0c0d;font-family:&quot;Liberation Mono&quot;,monospace;font-size:10.5px;line-height:13px;text-align:center">200</div>
<div class="t" style="left:739px;top:444px;font-size:11px;line-height:11px;color:#d7d7db;font-weight:400;transform:scaleX(.83);transform-origin:0 0">GET</div>
<svg style="left:777px;top:441px;" width="14" height="15" viewBox="0 0 14 15"><path d="M4.5 6.6V4.3a2.5 2.5 0 0 1 5 0V6.6" fill="none" stroke="#939395" stroke-width="2"/><rect x="2" y="6.3" width="10" height="6.7" rx=".8" fill="#939395"/><path d="M.5 13.9L13.2 1.2" stroke="#232327" stroke-width="2.6"/><path d="M.5 13.9L13.2 1.2" stroke="#f0386b" stroke-width="1.3"/></svg>
<div class="t" style="left:795px;top:444px;font-size:11px;line-height:11px;color:#d7d7db;font-weight:400;">example.c...</div>
<div class="t" style="left:862px;top:444px;font-size:11px;line-height:11px;color:#d7d7db;font-weight:400;">env.js</div>
<div class="t" style="left:1069px;top:444px;font-size:11px;line-height:11px;color:#d7d7db;font-weight:400;">script</div>
<div class="t" style="left:1151px;top:444px;font-size:11px;line-height:11px;color:#d7d7db;font-weight:400;">js</div>
<div class="t" style="left:1192px;top:444px;font-size:11px;line-height:11px;color:#d7d7db;font-weight:400;">4.13 kB</div>
<div class="t" style="left:1275px;top:444px;font-size:11px;line-height:11px;color:#d7d7db;font-weight:400;">3.89...</div>
<div style="left:691px;top:460px;width:619px;height:24px;background:#2a2a2e;"></div>
<div class="t" style="left:697px;top:467px;width:22px;height:13px;padding-top:1px;border-radius:3px;background:#75bfff;color:#0c0c0d;font-family:&quot;Liberation Mono&quot;,monospace;font-size:10.5px;line-height:13px;text-align:center">101</div>
<div class="t" style="left:739px;top:468px;font-size:11px;line-height:11px;color:#d7d7db;font-weight:400;transform:scaleX(.83);transform-origin:0 0">GET</div>
<svg style="left:777px;top:465px;" width="14" height="15" viewBox="0 0 14 15"><path d="M4.5 6.6V4.3a2.5 2.5 0 0 1 5 0V6.6" fill="none" stroke="#939395" stroke-width="2"/><rect x="2" y="6.3" width="10" height="6.7" rx=".8" fill="#939395"/><path d="M.5 13.9L13.2 1.2" stroke="#2a2a2e" stroke-width="2.6"/><path d="M.5 13.9L13.2 1.2" stroke="#f0386b" stroke-width="1.3"/></svg>
<div class="t" style="left:795px;top:468px;font-size:11px;line-height:11px;color:#d7d7db;font-weight:400;">example.c...</div>
<div class="t" style="left:862px;top:468px;font-size:11px;line-height:11px;color:#d7d7db;font-weight:400;">/?token=gmTKU3wsYalt</div>
<div class="t" style="left:1069px;top:468px;font-size:11px;line-height:11px;color:#d7d7db;font-weight:400;"><span style="color:#5aabff;text-decoration:underline">client:802</span> (w...</div>
<div class="t" style="left:1151px;top:468px;font-size:11px;line-height:11px;color:#d7d7db;font-weight:400;">plain</div>
<div class="t" style="left:1192px;top:468px;font-size:11px;line-height:11px;color:#d7d7db;font-weight:400;">163 B</div>
<div class="t" style="left:1275px;top:468px;font-size:11px;line-height:11px;color:#d7d7db;font-weight:400;">0 B</div>
<div class="t" style="left:697px;top:491px;width:22px;height:13px;padding-top:1px;border-radius:3px;background:#86de74;color:#0c0c0d;font-family:&quot;Liberation Mono&quot;,monospace;font-size:10.5px;line-height:13px;text-align:center">200</div>
<div class="t" style="left:739px;top:492px;font-size:11px;line-height:11px;color:#d7d7db;font-weight:400;transform:scaleX(.83);transform-origin:0 0">GET</div>
<svg style="left:777px;top:489px;" width="14" height="15" viewBox="0 0 14 15"><path d="M4.5 6.6V4.3a2.5 2.5 0 0 1 5 0V6.6" fill="none" stroke="#939395" stroke-width="2"/><rect x="2" y="6.3" width="10" height="6.7" rx=".8" fill="#939395"/><path d="M.5 13.9L13.2 1.2" stroke="#232327" stroke-width="2.6"/><path d="M.5 13.9L13.2 1.2" stroke="#f0386b" stroke-width="1.3"/></svg>
<div class="t" style="left:795px;top:492px;font-size:11px;line-height:11px;color:#d7d7db;font-weight:400;">example.c...</div>
<div class="t" style="left:862px;top:492px;font-size:11px;line-height:11px;color:#d7d7db;font-weight:400;">vite.svg</div>
<div class="t" style="left:1069px;top:492px;font-size:11px;line-height:11px;color:#d7d7db;font-weight:400;"><span style="color:#5aabff;text-decoration:underline">FaviconLoad</span>...</div>
<div class="t" style="left:1151px;top:492px;font-size:11px;line-height:11px;color:#d7d7db;font-weight:400;">svg</div>
<div class="t" style="left:1192px;top:492px;font-size:11px;line-height:11px;color:#d7d7db;font-weight:400;">1.77 kB</div>
<div class="t" style="left:1275px;top:492px;font-size:11px;line-height:11px;color:#d7d7db;font-weight:400;">1.50...</div>
<div style="left:732px;top:171px;width:1px;height:337px;background:#38383d;"></div>
<div style="left:773px;top:171px;width:1px;height:337px;background:#38383d;"></div>
<div style="left:856px;top:171px;width:1px;height:337px;background:#38383d;"></div>
<div style="left:1063px;top:171px;width:1px;height:337px;background:#38383d;"></div>
<div style="left:1146px;top:171px;width:1px;height:337px;background:#38383d;"></div>
<div style="left:1186px;top:171px;width:1px;height:337px;background:#38383d;"></div>
<div style="left:1269px;top:171px;width:1px;height:337px;background:#38383d;"></div>
<div style="left:689px;top:239px;width:621px;height:33px;border:4px solid #e41e26"></div>
<div style="left:690px;top:410px;width:623px;height:29px;border:4px solid #e41e26"></div>
</body></html>
